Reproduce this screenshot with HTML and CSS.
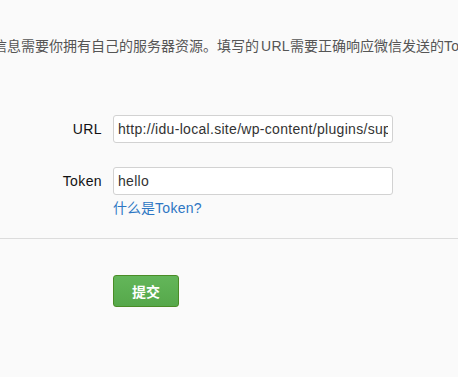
FILE: index.html
```html
<!DOCTYPE html>
<html lang="zh">
<head>
<meta charset="utf-8">
<title>设置</title>
<link rel="stylesheet" href="styles.css">
</head>
<body>
<p class="intro">信息需要你拥有自己的服务器资源。填写的<span class="latin intro-latin">URL</span>需要正确响应微信发送的<span class="latin">Token</span>验证</p>
<form class="settings">
  <div class="form-table">
    <label class="label" for="url">URL</label>
    <div class="field">
      <input id="url" class="text-input" type="text" value="http://idu-local.site/wp-content/plugins/super-wechat/">
    </div>
    <label class="label" for="token">Token</label>
    <div class="field">
      <input id="token" class="text-input" type="text" value="hello">
      <p class="description"><a href="#" class="help-link">什么是<span class="latin">Token?</span></a></p>
    </div>
  </div>
  <hr class="divider">
  <div class="actions">
    <button type="button" class="btn-submit">提交</button>
  </div>
</form>
</body>
</html>
```
FILE: styles.css
```css
html, body {
  margin: 0;
  padding: 0;
}
body {
  background: #fafafa;
  font-family: "Liberation Sans", "Noto Sans CJK SC", sans-serif;
  font-size: 14px;
  color: #222;
  overflow: hidden;
}
.latin {
  letter-spacing: 0.3px;
}
.intro {
  margin: 0 0 0 -7px;
  padding-top: 36px;
  line-height: 20px;
  color: #555;
  white-space: nowrap;
}
.intro-latin {
  padding-left: 2px;
}
.settings {
  margin: 0;
}
.form-table {
  margin-top: 59px;
  display: grid;
  grid-template-columns: 102px 280px;
  column-gap: 11px;
  row-gap: 24px;
  align-items: start;
}
.label {
  text-align: right;
  line-height: 28px;
  color: #111;
  letter-spacing: 0.4px;
}
.field {
  display: flex;
  flex-direction: column;
}
.text-input {
  box-sizing: border-box;
  width: 280px;
  height: 28px;
  margin: 0;
  padding: 0 4px;
  border: 1px solid #d2d2d2;
  border-radius: 3px;
  background: #fff;
  font-family: "Liberation Sans", "Noto Sans CJK SC", sans-serif;
  font-size: 14px;
  letter-spacing: 0.3px;
  color: #333;
  outline: none;
}
.description {
  margin: 4px 0 0;
  line-height: 18px;
}
.help-link {
  color: #2d76c3;
  text-decoration: none;
}
.divider {
  margin: 21px 0 0;
  border: 0;
  border-top: 1px solid #dcdcdc;
  height: 0;
}
.actions {
  padding: 36px 0 0 113px;
}
.btn-submit {
  box-sizing: border-box;
  width: 66px;
  height: 32px;
  margin: 0;
  padding: 0;
  border: 1px solid #4a8c26;
  border-radius: 3px;
  background: linear-gradient(#63b65a, #56a84b);
  color: #fff;
  font-family: "Liberation Sans", "Noto Sans CJK SC", sans-serif;
  font-size: 14px;
  font-weight: bold;
  cursor: pointer;
}
```
